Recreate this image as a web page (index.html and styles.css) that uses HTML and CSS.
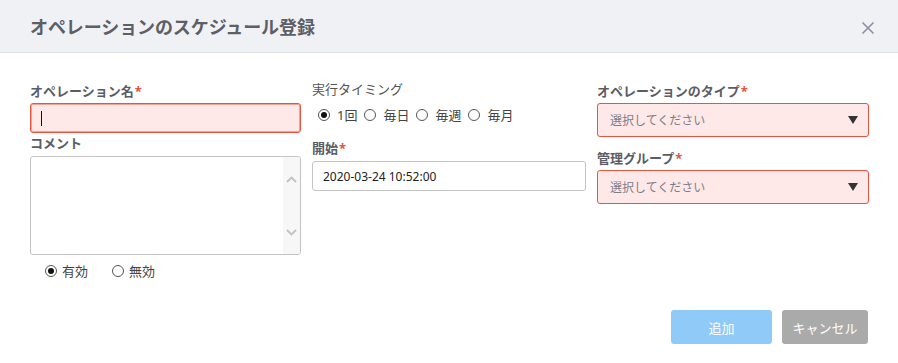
FILE: index.html
```html
<!DOCTYPE html>
<html>
<head>
  <title>オペレーションのスケジュール登録</title>
  <meta charset="utf-8">
  <link rel="stylesheet" href="styles.css">
</head>
<body>
  <div class="dialog">
    <div class="dialog-header">
      <h1>オペレーションのスケジュール登録</h1>
      <svg class="close" width="14" height="14" viewBox="0 0 14 14">
        <path d="M1.5 1.5 L12.5 12.5 M12.5 1.5 L1.5 12.5" stroke="#8b90a0" stroke-width="1.6" fill="none"/>
      </svg>
    </div>

    <div class="dialog-body">
      <div class="col col-name">
        <label class="label">オペレーション名<span class="req">*</span></label>
        <div class="field field-error field-input"><span class="caret"></span></div>
        <label class="label label-comment">コメント</label>
        <div class="textarea">
          <div class="textarea-text"></div>
          <div class="scrollbar">
            <svg width="11" height="7" viewBox="0 0 11 7"><path d="M1 6 L5.5 1.5 L10 6" stroke="#c2c2c2" stroke-width="1.8" fill="none"/></svg>
            <svg width="11" height="7" viewBox="0 0 11 7"><path d="M1 1 L5.5 5.5 L10 1" stroke="#c2c2c2" stroke-width="1.8" fill="none"/></svg>
          </div>
        </div>
        <div class="radios radios-status">
          <span class="radio checked"></span><span class="radio-text">有効</span>
          <span class="radio"></span><span class="radio-text">無効</span>
        </div>
      </div>

      <div class="col col-timing">
        <label class="label label-plain">実行タイミング</label>
        <div class="radios radios-timing">
          <span class="radio checked"></span><span class="radio-text">1回</span>
          <span class="radio"></span><span class="radio-text">毎日</span>
          <span class="radio"></span><span class="radio-text">毎週</span>
          <span class="radio"></span><span class="radio-text">毎月</span>
        </div>
        <label class="label label-start">開始<span class="req">*</span></label>
        <div class="field field-input field-date">2020-03-24 10:52:00</div>
      </div>

      <div class="col col-type">
        <label class="label">オペレーションのタイプ<span class="req">*</span></label>
        <div class="field field-error select">
          <span class="placeholder">選択してください</span>
          <svg width="10" height="8" viewBox="0 0 10 8"><path d="M0 0 H10 L5 8 Z" fill="#333"/></svg>
        </div>
        <label class="label label-group">管理グループ<span class="req">*</span></label>
        <div class="field field-error select">
          <span class="placeholder">選択してください</span>
          <svg width="10" height="8" viewBox="0 0 10 8"><path d="M0 0 H10 L5 8 Z" fill="#333"/></svg>
        </div>
      </div>
    </div>

    <div class="dialog-footer">
      <button class="btn btn-add">追加</button>
      <button class="btn btn-cancel">キャンセル</button>
    </div>
  </div>
</body>
</html>
```

FILE: styles.css
```css
body {
  margin: 0;
  padding: 0;
  background: #ffffff;
  font-family: "Noto Sans", "Noto Sans CJK JP", sans-serif;
  color: #444;
}

.dialog {
  width: 898px;
  height: 363px;
  background: #fff;
}

.dialog-header {
  height: 52px;
  background: #f0f1f5;
  border-bottom: 1px solid #dfe0e5;
  display: flex;
  align-items: center;
  justify-content: space-between;
  padding: 0 23px 0 30px;
}

.dialog-header h1 {
  margin: 0;
  font-size: 18px;
  font-weight: bold;
  color: #5c5f67;
  letter-spacing: -0.1px;
}

.close {
  margin-top: 3px;
}

.dialog-body {
  box-sizing: border-box;
  height: 257px;
  padding: 29px 0 0 30px;
  display: grid;
  grid-template-columns: 271px 274px 272px;
  column-gap: 11px;
  align-items: start;
}

.col {
  display: flex;
  flex-direction: column;
}

.label {
  display: block;
  font-size: 13px;
  line-height: 18px;
  font-weight: bold;
  color: #5a5d66;
  margin-bottom: 3px;
}

.req {
  color: #e6533c;
  margin-left: 1px;
}

.label-plain {
  font-weight: normal;
  color: #555;
  margin-top: -2px;
  margin-bottom: 0;
}

.label-comment {
  margin-top: 1px;
  margin-bottom: 4px;
}

.label-start {
  margin-top: 15px;
  margin-bottom: 4px;
}

.label-group {
  margin-top: 12px;
}

.field {
  box-sizing: border-box;
  border: 1px solid #c4c4c4;
  border-radius: 3px;
  background: #fff;
  display: flex;
  align-items: center;
}

.field-input {
  height: 30px;
  padding-left: 10px;
}

.field-error {
  background: #ffe8e8;
  border-color: #e8553f;
}

.col-name .field-error {
  box-shadow: 0 0 0 1px #f3a396 inset;
}

.caret {
  width: 1px;
  height: 15px;
  background: #111;
}

.field-date {
  font-size: 12px;
  color: #222;
  padding-left: 10px;
}

.textarea {
  box-sizing: border-box;
  height: 99px;
  border: 1px solid #c4c4c4;
  border-radius: 3px;
  display: flex;
  overflow: hidden;
}

.textarea-text {
  flex: 1;
}

.scrollbar {
  width: 17px;
  background: #f7f7f7;
  display: flex;
  flex-direction: column;
  align-items: center;
  justify-content: space-between;
  padding: 19px 0 18px;
}

.radios {
  display: flex;
  align-items: center;
  font-size: 13px;
  line-height: 18px;
  color: #444;
}

.radios-status {
  margin-top: 7px;
  padding-left: 15px;
}

.radios-status .radio {
  margin-right: 5px;
}

.radios-status .radio-text {
  margin-right: 24px;
}

.radios-timing {
  margin-top: 8px;
  padding-left: 6px;
}

.radios-timing .radio-text {
  margin-right: 7px;
}

.radio {
  box-sizing: border-box;
  width: 12px;
  height: 12px;
  border: 1px solid #555;
  border-radius: 50%;
  margin-right: 7px;
  display: flex;
  align-items: center;
  justify-content: center;
}

.radio.checked::after {
  content: "";
  width: 6px;
  height: 6px;
  border-radius: 50%;
  background: #111;
}

.select {
  height: 34px;
  padding: 0 10px 0 12px;
  justify-content: space-between;
}

.placeholder {
  font-size: 12px;
  color: #7b7e88;
}

.dialog-footer {
  display: flex;
  justify-content: flex-end;
  gap: 10px;
  padding-right: 30px;
}

.btn {
  height: 34px;
  border: none;
  border-radius: 3px;
  color: #fff;
  font-family: "Noto Sans", "Noto Sans CJK JP", sans-serif;
  font-size: 13px;
  padding: 0;
}

.btn-add {
  width: 101px;
  background: #90caf9;
}

.btn-cancel {
  width: 86px;
  background: #aaaaaa;
}
```
